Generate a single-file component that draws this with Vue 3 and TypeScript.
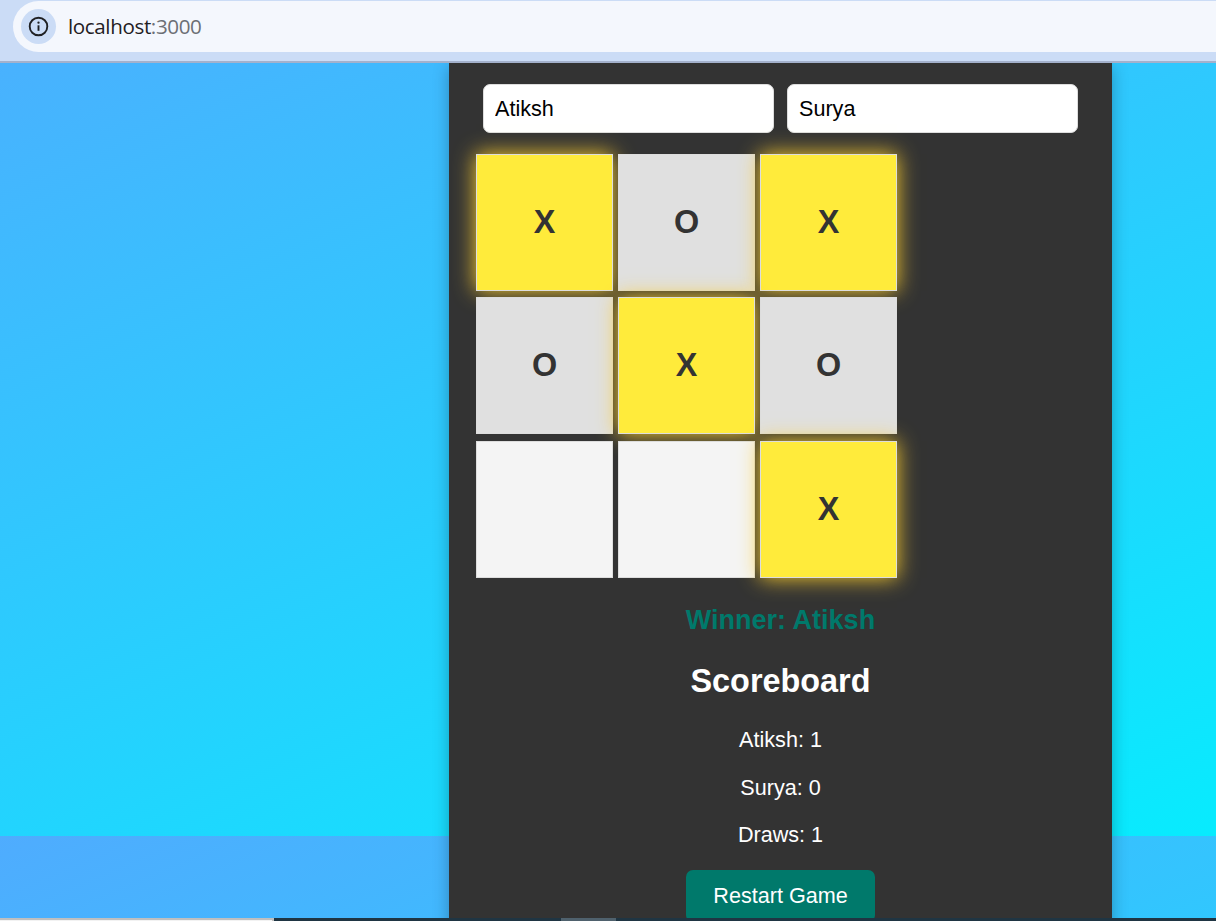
<script setup lang="ts">
import { computed, ref } from 'vue'

type Mark = 'X' | 'O' | ''

const firstPlayer = ref('Atiksh')
const secondPlayer = ref('Surya')
const board = ref<Mark[]>(['X', 'O', 'X', 'O', 'X', 'O', '', '', 'X'])
const scores = ref({ first: 1, second: 0, draws: 1 })

const lines = [
  [0, 1, 2], [3, 4, 5], [6, 7, 8],
  [0, 3, 6], [1, 4, 7], [2, 5, 8],
  [0, 4, 8], [2, 4, 6],
]

const winningLine = computed<number[]>(
  () => lines.find(([a, b, c]) => board.value[a] && board.value[a] === board.value[b] && board.value[a] === board.value[c]) ?? [],
)

const winner = computed(() => {
  if (!winningLine.value.length) return ''
  return board.value[winningLine.value[0]] === 'X' ? firstPlayer.value : secondPlayer.value
})

// Every mark of the winning side lights up, not only the three in the line.
function isHighlighted(mark: Mark) {
  return winningLine.value.length > 0 && mark === board.value[winningLine.value[0]]
}

function play(index: number) {
  if (board.value[index] || winner.value) return
  const filled = board.value.filter(Boolean).length
  board.value[index] = filled % 2 === 0 ? 'X' : 'O'
}

function restart() {
  board.value = Array<Mark>(9).fill('')
}
</script>

<template>
  <div class="window">
    <header class="toolbar">
      <div class="address">
        <span class="info">
          <svg width="21" height="21" viewBox="0 0 21 21" fill="none">
            <circle cx="10.5" cy="10.5" r="8.8" stroke="#1f2023" stroke-width="1.9" />
            <path d="M10.5 9.3v5.5" stroke="#1f2023" stroke-width="1.9" />
            <circle cx="10.5" cy="6.7" r="1.15" fill="#1f2023" />
          </svg>
        </span>
        <span class="url">localhost<span class="port">:3000</span></span>
      </div>
    </header>

    <main class="page">
      <section class="panel">
        <div class="players">
          <input v-model="firstPlayer" type="text" spellcheck="false" />
          <input v-model="secondPlayer" type="text" spellcheck="false" />
        </div>
        <div class="board">
          <button
            v-for="(mark, i) in board"
            :key="i"
            class="cell"
            :class="{ taken: mark, win: isHighlighted(mark) }"
            @click="play(i)"
          >{{ mark }}</button>
        </div>
        <p class="winner">Winner: {{ winner }}</p>
        <h2>Scoreboard</h2>
        <p class="score">{{ firstPlayer }}: {{ scores.first }}</p>
        <p class="score">{{ secondPlayer }}: {{ scores.second }}</p>
        <p class="score">Draws: {{ scores.draws }}</p>
        <button class="restart" @click="restart">Restart Game</button>
      </section>
    </main>

    <footer class="taskbar">
      <span class="search"></span>
      <span class="active"></span>
    </footer>
  </div>
</template>

<style>
body {
  margin: 0;
  overflow: hidden;
}
</style>

<style scoped>
.window {
  display: flex;
  flex-direction: column;
  width: 1216px;
  height: 921px;
  overflow: hidden;
  font-family: "Liberation Sans", Arial, sans-serif;
}

.toolbar {
  box-sizing: border-box;
  flex: none;
  height: 63px;
  padding: 1px 0 0 13px;
  background: #cbdcf6;
  border-bottom: 2px solid #a4b1cc;
}

.address {
  display: flex;
  align-items: center;
  height: 51px;
  padding-left: 8px;
  background: #f4f7fd;
  border-radius: 26px 0 0 26px;
}

.info {
  display: flex;
  align-items: center;
  justify-content: center;
  width: 35px;
  height: 35px;
  border-radius: 50%;
  background: #cbdcf6;
}

.url {
  margin: 0 0 2px 12px;
  font: 20.6px/28px "Open Sans", "Noto Sans", sans-serif;
  letter-spacing: -0.38px;
  color: #1f2023;
}

.port {
  color: #6c6f75;
}

.page {
  flex: none;
  height: 855px;
  overflow: hidden;
  background: linear-gradient(157deg, #4facfe, #00f2fe) 0 -118px / 1561px 891px;
}

.panel {
  box-sizing: border-box;
  width: 663px;
  height: 900px;
  margin-left: 449px;
  padding: 21px 27px 0;
  background: #333;
  box-shadow: 0 4px 15px rgba(0, 0, 0, 0.28);
  text-align: center;
  color: #fff;
}

.players {
  display: flex;
  justify-content: center;
  gap: 13px;
}

.players input {
  box-sizing: border-box;
  width: 291px;
  height: 49px;
  padding: 0 11px;
  border: 1px solid #ddd;
  border-radius: 7px;
  outline: none;
  background: #fff;
  color: #000;
  font: 21.6px "Liberation Sans", Arial, sans-serif;
}

.board {
  display: grid;
  grid-template-columns: repeat(3, 137px);
  grid-template-rows: 143px 144px 137px;
  column-gap: 5px;
  margin-top: 21px;
}

.cell {
  height: 137px;
  padding: 0;
  border: 1px solid #ddd;
  border-radius: 0;
  background: #f4f4f4;
  color: #333;
  font: bold 32.4px "Liberation Sans", Arial, sans-serif;
}

.taken {
  background: #e0e0e0;
}

.win {
  background: #ffeb3b;
  box-shadow: 0 0 20px #fbcd2d;
}

.winner {
  margin: 26px 0 0;
  font-size: 27px;
  font-weight: bold;
  line-height: 32px;
  color: #00796b;
}

h2 {
  margin: 26px 0 0;
  font-size: 32.4px;
  line-height: 38px;
}

.score {
  margin: 22px 0 0;
  font-size: 21.6px;
  line-height: 25.5px;
}

h2 + .score {
  margin-top: 27px;
}

.restart {
  width: 189px;
  height: 52px;
  margin-top: 22px;
  padding: 0;
  border: 0;
  border-radius: 7px;
  background: #00796b;
  color: #fff;
  font: 21.6px "Liberation Sans", Arial, sans-serif;
}

.taskbar {
  display: flex;
  flex: none;
  height: 3px;
  background: #1f3543;
}

.search {
  box-sizing: border-box;
  width: 274px;
  background: #f2f2f2;
  border-top: 2px solid #bfbfbf;
  border-right: 2px solid #bfbfbf;
}

.active {
  width: 55px;
  margin-left: 287px;
  background: #4f616d;
}
</style>
